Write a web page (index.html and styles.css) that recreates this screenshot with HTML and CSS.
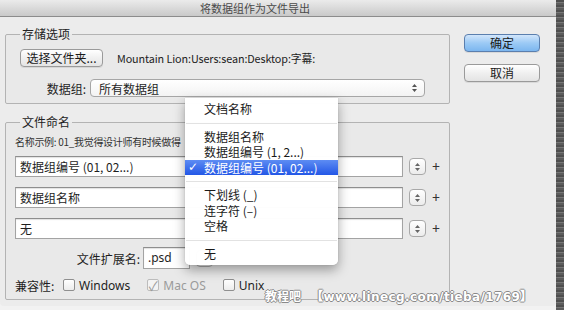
FILE: index.html
```html
<!DOCTYPE html>
<html lang="zh-CN">
<head>
    <meta charset="UTF-8">
    <title>将数据组作为文件导出</title>
    <link rel="stylesheet" href="styles.css">
</head>
<body>
    <div class="screen">
        <div class="window">
            <div class="titlebar">将数据组作为文件导出</div>

            <div class="content">
                <div class="left">
                    <!-- 存储选项 -->
                    <fieldset class="group save-group">
                        <legend>存储选项</legend>
                        <div class="row">
                            <button class="btn folder-btn" type="button">选择文件夹...</button>
                            <span class="path">Mountain Lion:Users:sean:Desktop:字幕:</span>
                        </div>
                        <div class="row select-row">
                            <span class="label">数据组:</span>
                            <div class="select">
                                <span>所有数据组</span>
                                <svg class="arrows" width="7" height="10" viewBox="0 0 7 10"><path d="M3.5 1 L6 4 H1 Z M3.5 9 L6 6 H1 Z" fill="#555"/></svg>
                            </div>
                        </div>
                    </fieldset>

                    <!-- 文件命名 -->
                    <fieldset class="group name-group">
                        <legend>文件命名</legend>
                        <div class="example">名称示例: 01_我觉得设计师有时候做得</div>

                        <div class="name-row">
                            <div class="field">数据组编号 (01, 02...)</div>
                            <div class="stepper"><svg width="7" height="10" viewBox="0 0 7 10"><path d="M3.5 1 L6 4 H1 Z M3.5 9 L6 6 H1 Z" fill="#666"/></svg></div>
                            <span class="plus">+</span>
                        </div>
                        <div class="name-row">
                            <div class="field">数据组名称</div>
                            <div class="stepper"><svg width="7" height="10" viewBox="0 0 7 10"><path d="M3.5 1 L6 4 H1 Z M3.5 9 L6 6 H1 Z" fill="#666"/></svg></div>
                            <span class="plus">+</span>
                        </div>
                        <div class="name-row">
                            <div class="field">无</div>
                            <div class="stepper"><svg width="7" height="10" viewBox="0 0 7 10"><path d="M3.5 1 L6 4 H1 Z M3.5 9 L6 6 H1 Z" fill="#666"/></svg></div>
                            <span class="plus">+</span>
                        </div>

                        <div class="ext-row">
                            <span class="ext-label">文件扩展名:</span>
                            <div class="field ext-field">.psd</div>
                            <div class="stepper"></div>
                        </div>

                        <div class="compat-row">
                            <span class="compat-label">兼容性:</span>
                            <span class="option">
                                <span class="check"></span><span class="check-text">Windows</span>
                            </span>
                            <span class="option">
                                <span class="check disabled">✓</span><span class="check-text muted">Mac OS</span>
                            </span>
                            <span class="option">
                                <span class="check"></span><span class="check-text">Unix</span>
                            </span>
                        </div>
                    </fieldset>
                </div>

                <div class="right">
                    <button class="btn dialog-btn default" type="button">确定</button>
                    <button class="btn dialog-btn" type="button">取消</button>
                </div>
            </div>

            <!-- popup menu for the first naming field -->
            <ul class="menu">
                <li>文档名称</li>
                <li class="sep"></li>
                <li>数据组名称</li>
                <li>数据组编号 (1, 2...)</li>
                <li class="selected"><span class="tick">✓</span>数据组编号 (01, 02...)</li>
                <li class="sep"></li>
                <li>下划线 (_)</li>
                <li>连字符 (–)</li>
                <li>空格</li>
                <li class="sep"></li>
                <li>无</li>
            </ul>

            <div class="watermark"><span class="wm-cn">教程吧</span><span class="wm-url">【www.linecg.com/tieba/1769】</span></div>
        </div>
        <div class="strip"></div>
    </div>
</body>
</html>
```

FILE: styles.css
```css
body { margin: 0; font-family: "Noto Sans", "Noto Sans CJK SC", sans-serif; color: #1e1e1e; background: #f2f2f2; }
.screen { display: flex; width: 564px; height: 310px; overflow: hidden; }
.window { position: relative; width: 556px; height: 306px; background: #ececec; border-radius: 0 0 4px 4px; }
.strip {
    width: 8px;
    height: 310px;
    background: repeating-linear-gradient(0deg, #5c5c5c 0, #5c5c5c 2px, #777 2px, #777 3px, #4e4e4e 3px, #4e4e4e 5px);
}

.titlebar {
    height: 16px;
    line-height: 16px;
    border-bottom: 1px solid #8c8c8c;
    background: linear-gradient(#ebebeb, #c9c9c9);
    text-align: center;
    font-size: 11px;
    color: #4a4a4a;
    padding-right: 46px;
    font-family: "Noto Sans CJK SC", sans-serif;
}

.content { display: flex; padding: 10px 0 0 5px; }
.left { width: 445px; }
.right { display: flex; flex-direction: column; gap: 12px; margin-left: 14px; padding-top: 7px; }

.group {
    margin: 0;
    border: 1px solid #b3b3b3;
    border-radius: 2px;
    background: #e9e9e9;
    font-family: "Noto Sans CJK SC", sans-serif;
    font-size: 12px;
}
.group legend { font-size: 12px; line-height: 14px; padding: 0 2px; color: #222; }

.save-group { padding: 8px 22px 6px 14px; }
.name-group { padding: 6px 9px 6px 9px; margin-top: 11px; }
.name-group legend { margin-left: 5px; }

.row { display: flex; align-items: center; }
.select-row { margin-top: 12px; }

.btn {
    font-family: "Noto Sans CJK SC", sans-serif;
    font-size: 12px;
    color: #1a1a1a;
    height: 18px;
    padding: 0;
    border: 1px solid #9a9a9a;
    border-radius: 4px;
    background: linear-gradient(#ffffff, #f0f0f0 50%, #e4e4e4);
    box-shadow: 0 1px 0 rgba(0, 0, 0, 0.08);
    line-height: 16px;
}
.folder-btn { width: 83px; }
.dialog-btn { width: 76px; }
.dialog-btn.default {
    border-color: #5b7fae;
    background: linear-gradient(#d2e6fb, #9ccaf5 50%, #7cb6ef);
}
.path { margin-left: 14px; font-size: 10.8px; color: #222; letter-spacing: -0.1px; white-space: nowrap; }

.label { width: 66px; text-align: right; margin-right: 4px; }
.select {
    display: flex;
    align-items: center;
    justify-content: space-between;
    width: 335px;
    height: 18px;
    box-sizing: border-box;
    padding: 0 6px 0 8px;
    border: 1px solid #a6a6a6;
    border-radius: 4px;
    background: linear-gradient(#ffffff, #f3f3f3);
}

.example {
    font-size: 10px;
    line-height: 14px;
    color: #333;
    letter-spacing: -0.3px;
    white-space: nowrap;
}

.name-row { display: flex; align-items: center; margin-top: 10px; height: 21px; }
.example + .name-row { margin-top: 7px; }
.field {
    width: 388px;
    height: 21px;
    box-sizing: border-box;
    padding: 0 4px;
    line-height: 19px;
    border: 1px solid #a3a3a3;
    border-top-color: #8e8e8e;
    background: #fff;
    box-shadow: inset 0 1px 1px rgba(0, 0, 0, 0.12);
    font-size: 12px;
}
.stepper {
    display: flex;
    align-items: center;
    justify-content: center;
    width: 17px;
    height: 17px;
    margin-left: 6px;
    box-sizing: border-box;
    border: 1px solid #a8a8a8;
    border-radius: 4px;
    background: linear-gradient(#ffffff, #ececec);
}
.plus { margin-left: 6px; font-family: "Noto Sans", sans-serif; font-size: 14px; color: #333; }

.ext-row { display: flex; align-items: center; margin-top: 8px; height: 22px; }
.ext-label { width: 125px; text-align: right; margin-right: 3px; }
.ext-field { width: 47px; height: 22px; line-height: 20px; font-family: "Noto Sans", sans-serif; }

.compat-row { display: flex; align-items: center; gap: 17px; margin-top: 8px; height: 16px; }
.compat-label { width: 48px; margin-right: -17px; }
.option { display: flex; align-items: center; }
.check {
    display: inline-flex;
    align-items: center;
    justify-content: center;
    width: 12px;
    height: 12px;
    box-sizing: border-box;
    border: 1px solid #8f8f8f;
    border-radius: 2px;
    background: linear-gradient(#ffffff, #ececec);
    font-size: 13px;
    color: #9a9a9a;
}
.check.disabled { border-color: #bcbcbc; background: #f3f3f3; }
.check-text { margin-left: 4px; font-family: "Noto Sans", sans-serif; font-size: 12px; }
.check-text.muted { color: #9a9a9a; }

.menu {
    position: absolute;
    left: 185px;
    top: 98px;
    width: 153px;
    height: 167px;
    box-sizing: border-box;
    margin: 0;
    padding: 3px 0 0;
    list-style: none;
    background: rgba(255, 255, 255, 0.98);
    border-radius: 0 0 5px 5px;
    box-shadow: 0 5px 12px rgba(0, 0, 0, 0.35), 0 0 1px rgba(0, 0, 0, 0.3);
    font-family: "Noto Sans CJK SC", sans-serif;
    font-size: 12px;
}
.menu li { position: relative; height: 15.5px; line-height: 15.5px; padding-left: 19px; color: #1a1a1a; white-space: nowrap; }
.menu li.sep { height: 12px; padding: 0; }
.menu li.sep::after { content: ""; position: absolute; left: 1px; right: 1px; top: 6px; border-top: 1px solid #e2e2e2; }
.menu li.selected { background: linear-gradient(#5d8cf3, #2357e6); color: #fff; }
.tick { position: absolute; left: 3px; font-family: "DejaVu Sans", sans-serif; }

.watermark {
    position: absolute;
    left: 265px;
    top: 284px;
    white-space: nowrap;
    color: #fff;
    font-weight: bold;
    text-shadow: -1px 0 #8a8a8a, 1px 0 #8a8a8a, 0 -1px #8a8a8a, 0 1px #8a8a8a;
}
.wm-cn { font-family: "Noto Sans CJK SC", sans-serif; font-size: 12px; }
.wm-url { margin-left: 10px; font-family: "DejaVu Sans", sans-serif; font-size: 12px; letter-spacing: 0.4px; }
```
